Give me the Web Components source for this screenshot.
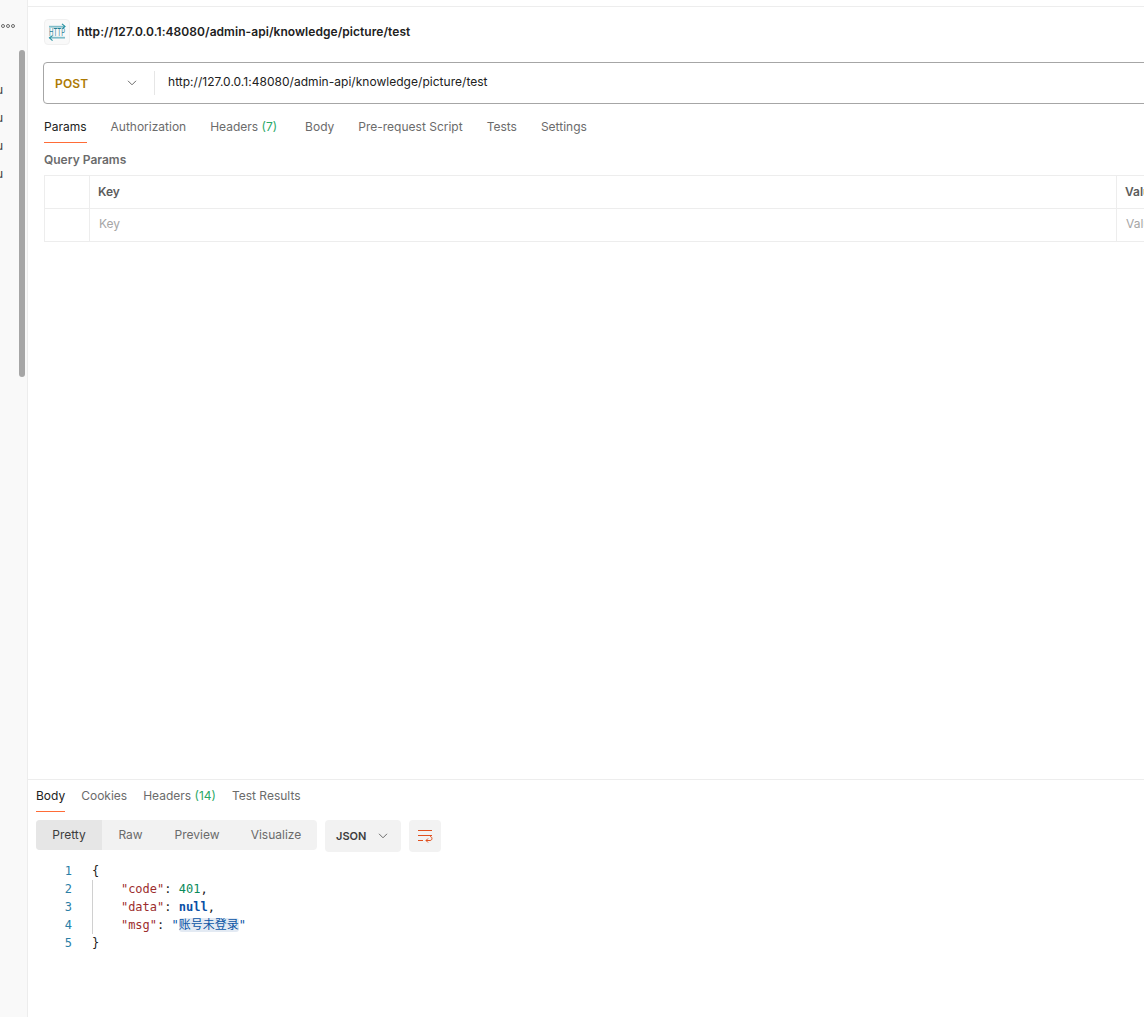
<!DOCTYPE html>
<html><head><meta charset="utf-8"><title>Postman</title>
<style>
html,body{margin:0;padding:0;background:#fff;height:100%;overflow:hidden}
body{font-family:Inter,"Noto Sans CJK SC",sans-serif;font-size:13px;color:#212121}
</style></head>
<body>
<app-shell>
  <side-bar slot="side"></side-bar>
  <request-title></request-title>
  <url-bar></url-bar>
  <tab-strip class="req" active="Params" items='[["Params"],["Authorization"],["Headers","(7)",4],["Body"],["Pre-request Script"],["Tests"],["Settings"]]'></tab-strip>
  <params-table></params-table>
  <response-pane slot="response"></response-pane>
</app-shell>
<script>
function def(name, css, html, init){
  customElements.define(name, class extends HTMLElement{
    constructor(){super();this.attachShadow({mode:'open'}).innerHTML='<style>'+css+'</style>'+html;}
    connectedCallback(){ if(init) init.call(this,this.shadowRoot); }
  });
}
def('app-shell',`
:host{display:flex;width:1144px;height:1017px;overflow:hidden}
.side{flex:none;width:27px}
.main{flex:none;width:1117px;display:flex;flex-direction:column;box-sizing:border-box;border-left:1px solid #ededed;padding-top:6px}
.req{flex:1;border-top:1px solid #ededed;min-height:0;overflow:hidden}
.res{flex:none;height:238px;box-sizing:border-box;border-top:1px solid #ededed}
`,`<div class="side"><slot name="side"></slot></div>
<div class="main"><div class="req"><slot></slot></div><div class="res"><slot name="response"></slot></div></div>`);

def('side-bar',`
:host{display:block;position:relative;width:27px;height:1017px;background:#f9f9f9;overflow:hidden}
.dots{display:flex;gap:1px;padding:24px 0 0 0;height:5px;margin-left:1px}
.dots i{width:4px;height:4px;border:1px solid #6b6b6b;border-radius:50%;box-sizing:border-box}
.list{margin-top:52px;display:flex;flex-direction:column;width:3px;overflow:hidden;}
.list span{height:28px;line-height:18px;font-size:12px;color:#3a3a3a;direction:rtl;white-space:nowrap;width:3px;overflow:hidden;display:block}
.thumb{position:absolute;left:19px;top:50px;width:6px;height:327px;background:#a6a6a6;border-radius:3px}
`,`<div class="dots"><i></i><i></i><i></i></div>
<div class="list"><span>u</span><span>u</span><span>u</span><span>u</span></div>
<div class="thumb"></div>`);

def('request-title',`
:host{display:flex;align-items:center;gap:7px;height:49px;padding-left:16px;box-sizing:border-box}
.ic{width:26px;height:26px;box-sizing:border-box;border:1px solid #f0f0f0;border-radius:4px;background:#f9f9f9;display:flex;align-items:center;justify-content:center}
.t{font-weight:600;font-size:12px;letter-spacing:.055px;color:#212121}
svg{display:block}
`,`<div class="ic"><svg width="20" height="20" viewBox="0 0 20 20" fill="none">
<path d="M2 4.7H17.5" stroke="#7fbcc8" stroke-width="1.8"/><path d="M15 1.8L18 4.4L16 6" stroke="#1f8f9f" stroke-width="1.1"/>
<path d="M2.5 15.7H18" stroke="#7fbcc8" stroke-width="1.8"/><path d="M5.5 13.6L2.5 15.9L5.5 18.6" stroke="#1f8f9f" stroke-width="1.1"/>
<text x="10" y="13.8" font-family="Inter,sans-serif" font-size="10.5" fill="#1f7f96" text-anchor="middle" textLength="16" lengthAdjust="spacingAndGlyphs">HTTP</text>
</svg></div><div class="t">http://127.0.0.1:48080/admin-api/knowledge/picture/test</div>`);

def('url-bar',`
:host{display:flex;align-items:center;height:42px;box-sizing:border-box;margin:6px -60px 0 15px;border:1px solid #a6a6a6;border-radius:4px}
.m{flex:none;width:111px;box-sizing:border-box;padding-left:11px;display:flex;align-items:center;justify-content:space-between;padding-right:17px;height:24px;border-right:1px solid #e6e6e6}
.m b{font-weight:600;font-size:12px;color:#ad7a03;letter-spacing:.2px}
.u{padding-left:13px;font-size:12px;letter-spacing:.03px;color:#212121;position:relative;top:-2px}
svg{display:block}
`,`<div class="m"><b>POST</b><svg width="10" height="6" viewBox="0 0 10 6" fill="none"><path d="M1 .8L5 4.8L9 .8" stroke="#6b6b6b"/></svg></div><div class="u">http://127.0.0.1:48080/admin-api/knowledge/picture/test</div>`);

def('tab-strip',`
:host{display:block}
.row{display:flex}
.t{font-size:12px;color:#6b6b6b;white-space:nowrap;box-sizing:border-box;border-bottom:1px solid transparent}
.t em{font-style:normal;color:#2aa866}
.t.on{color:#212121;border-bottom-color:#ff6c37}
`,`<div class="row"></div>`,function(r){
  const items=JSON.parse(this.getAttribute('items')),act=this.getAttribute('active');
  const gap=this.getAttribute('gap')||'24';
  const row=r.querySelector('.row');
  if(row.children.length) return;
  const h=this.getAttribute('h')||'31';
  const lh=this.getAttribute('lh')||'30';
  const ml=this.getAttribute('ml')||'16';
  const mt=this.getAttribute('mt')||'8';
  row.style.cssText=`gap:${gap}px;margin:${mt}px 0 0 ${ml}px;height:${h}px`;
  items.forEach(([a,b,pad])=>{const d=document.createElement('div');d.className='t'+(a===act?' on':'');d.style.lineHeight=lh+'px';d.style.height=h+'px';d.textContent=a;
    if(pad)d.style.marginRight=pad+'px';
    if(b){const e=document.createElement('em');e.textContent=' '+b;d.append(e);}
    row.append(d);});
});

def('params-table',`
:host{display:block;margin:0 0 0 16px}
h4{margin:0;font-size:12px;font-weight:600;color:#6b6b6b;line-height:16px;padding:9px 0 7px}
.tb{display:grid;grid-template-columns:45px 1027px 60px;width:1132px;border-top:1px solid #ededed;border-left:1px solid #ededed}
.c{height:33px;box-sizing:border-box;border-right:1px solid #ededed;border-bottom:1px solid #ededed;font-size:12px;line-height:32px;padding-left:8px;white-space:nowrap;overflow:hidden}
.h{font-weight:600;color:#5c5c5c}
.p{color:#a6a6a6;padding-left:9px;line-height:30px}
`,`<h4>Query Params</h4><div class="tb"><div class="c"></div><div class="c h">Key</div><div class="c h">Value</div><div class="c"></div><div class="c p">Key</div><div class="c p">Value</div></div>`);

def('response-pane',`
:host{display:block;position:relative;overflow:hidden;height:237px}
.tools{display:flex;margin:8px 0 0 8px;gap:8px;align-items:flex-start}
.seg{display:flex;height:30px;background:#f2f2f2;border-radius:4px;overflow:hidden;font-size:12px;color:#6b6b6b;line-height:29px}
.seg span{display:block;text-align:center}
.seg .on{background:#e6e6e6;color:#3d3d3d}
.json{width:76px;height:32px;background:#f2f2f2;border-radius:4px;display:flex;align-items:center;justify-content:space-between;box-sizing:border-box;padding:0 13px 0 11px;font-size:11px;font-weight:600;color:#3d3d3d}
.wrap{width:32px;height:32px;background:#f2f2f2;border-radius:4px;display:flex;align-items:center;justify-content:center}
svg{display:block}
`,`<tab-strip gap="16" ml="8" mt="0" h="32" lh="31" active="Body" items='[["Body"],["Cookies"],["Headers","(14)"],["Test Results"]]'></tab-strip>
<div class="tools"><div class="seg"><span class="on" style="width:66px">Pretty</span><span style="width:57px">Raw</span><span style="width:76px">Preview</span><span style="width:82px">Visualize</span></div>
<div class="json">JSON<svg width="10" height="6" viewBox="0 0 10 6" fill="none"><path d="M1 .8L5 4.8L9 .8" stroke="#6b6b6b"/></svg></div>
<div class="wrap"><svg width="16" height="14" viewBox="0 0 16 14" fill="none" stroke="#e0501f" stroke-width="1"><path d="M1 1.5H15M1 6.5H15M1 11.5H6"/><path d="M9 11.5H13C15.6 11.5 15.6 7.5 13 7.5"/><path d="M11 9.5L9 11.5L11 13.5"/></svg></div></div>
<code-view></code-view>`);

def('code-view',`
:host{display:block;position:relative;margin-top:10px;font-family:"DejaVu Sans Mono","Noto Sans CJK SC",monospace;font-size:12px;line-height:18px}
.l{display:flex;height:18px;white-space:pre}
.n{width:44px;text-align:right;color:#2a7ea6;flex:none}
.c{margin-left:20px;color:#212121}
.k{color:#9c2d2d}.num{color:#0a8a5a}.nu{color:#0a4fa5;font-weight:600}.s{color:#0a55a5}
.sel{background:#e3eaf3;border-radius:3px}
.g{position:absolute;left:64px;top:18px;width:1px;height:54px;background:#d0d0d0}
`,`<div class="g"></div>
<div class="l"><span class="n">1</span><span class="c">{</span></div>
<div class="l"><span class="n">2</span><span class="c">    <span class="k">"code"</span>: <span class="num">401</span>,</span></div>
<div class="l"><span class="n">3</span><span class="c">    <span class="k">"data"</span>: <span class="nu">null</span>,</span></div>
<div class="l"><span class="n">4</span><span class="c">    <span class="k">"msg"</span>: <span class="s">"<span class="sel">账号未登录</span>"</span></span></div>
<div class="l"><span class="n">5</span><span class="c">}</span></div>`);
</script>
</body></html>
